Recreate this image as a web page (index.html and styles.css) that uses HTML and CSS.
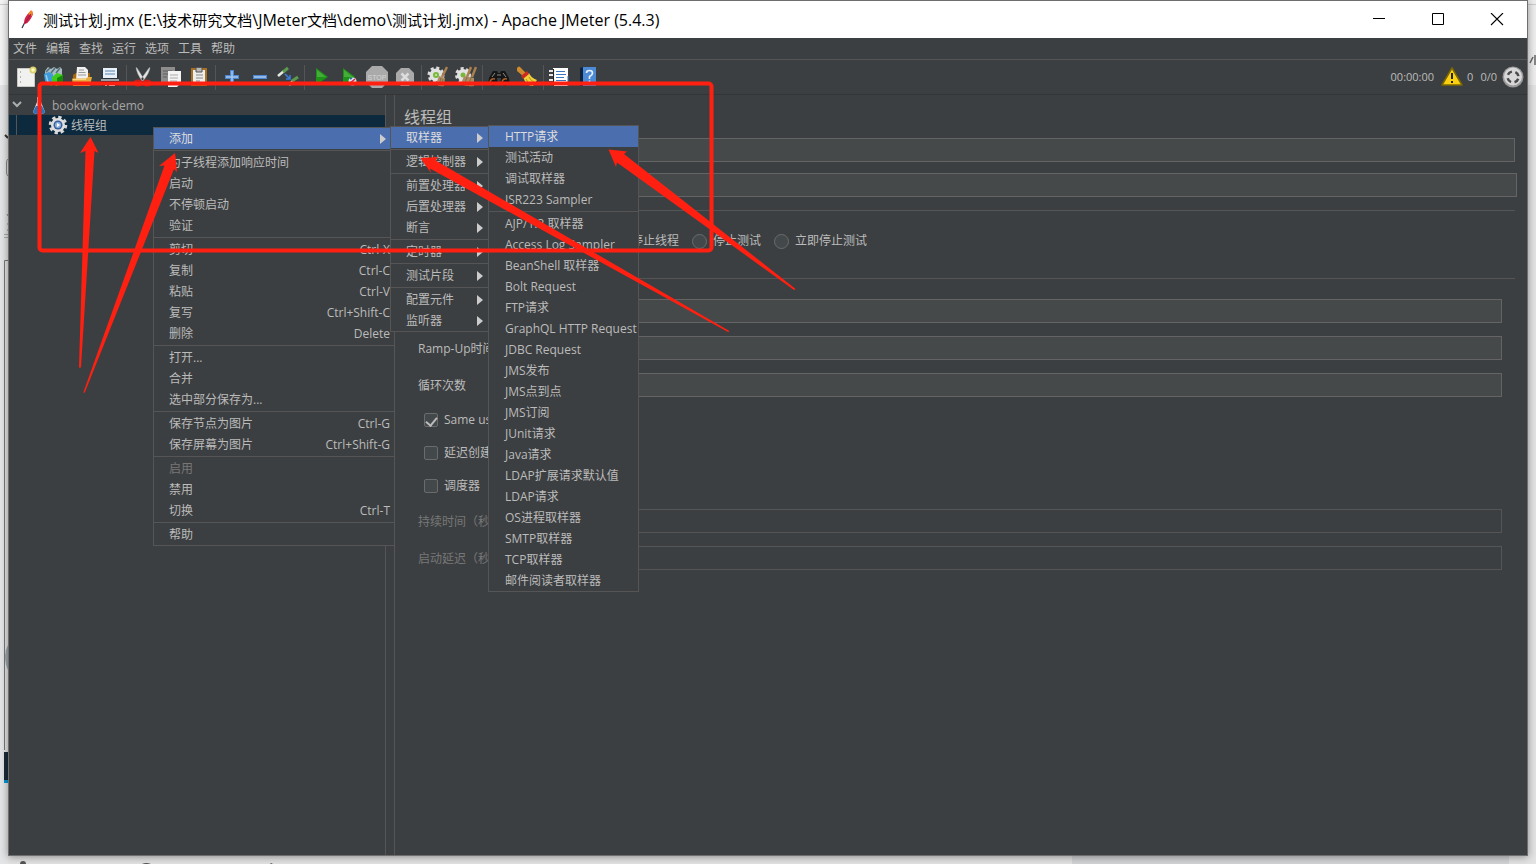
FILE: index.html
```html
<!DOCTYPE html>
<html lang="zh-CN">
<head>
<meta charset="utf-8">
<title>测试计划.jmx - Apache JMeter (5.4.3)</title>
<link rel="stylesheet" href="styles.css">
</head>
<body>
<div class="desktop" aria-hidden="true">
  <svg class="edge-left" width="8" height="864" viewBox="0 0 8 864">
    <path d="M0 0H8V85H0z" fill="#f4f4f4"/><path d="M0 4.500H8" stroke="#ccc"/><path d="M0 85H8V864H0z" fill="#e4e5e6"/>
    <path d="M5 135l3 3" stroke="#333" stroke-width="2"/><path d="M8 159Q6.500 160 6.500 163V172Q6.500 175 8 176" fill="none" stroke="#888"/>
    <path d="M7 214l1 2M7 224h1M7 230h1" stroke="#888"/><path d="M4 234.500H8M4 237.500H8" stroke="#aaa"/>
    <path d="M4.500 750V260.500H8" fill="none" stroke="#777"/><path d="M8 645Q5 650 5 656Q5 664 8 670z" fill="#9fa9b1"/>
    <path d="M4 752H8V780H4z" fill="#1c2b35"/><path d="M4 780H8V783H4z" fill="#0596d4"/>
  </svg>
  <svg class="edge-right" width="8" height="864" viewBox="0 0 8 864">
    <path d="M0 0H8V85H0z" fill="#eeeeee"/><path d="M0 4.500H8" stroke="#ccc"/><path d="M2 63l3-6M7 55v10" stroke="#666" stroke-width="1.500" fill="none"/>
  </svg>
  <svg class="edge-bottom" width="400" height="8" viewBox="0 0 400 8"><path d="M20 8q0-3 3-3t3 3M142 8q4-2 9 0M270 8l1-1 2 1" fill="#555"/></svg>
  <div class="edge-panel"></div>
</div>

<div class="window">
  <header class="titlebar">
    <svg class="app-icon" width="16" height="22" viewBox="0 0 16 22"><path d="M3 19L6 13" stroke="#334" stroke-width="1.300"/><path d="M5 15Q5 9 8 6Q10 3 12 2L14 5Q13 8 11 11Q9 14 6 15z" fill="#d22345"/><path d="M9 5L12 1L14 3L13 7z" fill="#f08a28"/><path d="M6 14L12 5" stroke="#8f1952" stroke-width="1"/></svg>
    <h1 class="title"><span class="han">测试计划</span>.jmx (E:\<span class="han">技术研究文档</span>\JMeter<span class="han">文档</span>\demo\<span class="han">测试计划</span>.jmx) - Apache JMeter (5.4.3)</h1>
    <div class="controls">
      <button class="control" aria-label="最小化"><svg width="14" height="14" viewBox="0 0 14 14"><path d="M1 5.500H13" stroke="#000"/></svg></button>
      <button class="control" aria-label="最大化"><svg width="14" height="14" viewBox="0 0 14 14"><path d="M1.500 0.500H12.500V11.500H1.500z" stroke="#000" fill="none"/></svg></button>
      <button class="control" aria-label="关闭"><svg width="14" height="14" viewBox="0 0 14 14"><path d="M1 0L13 12M13 0L1 12" stroke="#000" stroke-width="1.100"/></svg></button>
    </div>
  </header>

  <nav class="menubar">
    <button>文件</button><button>编辑</button><button>查找</button><button>运行</button><button>选项</button><button>工具</button><button>帮助</button>
  </nav>

  <div class="toolbar">
    <button class="tool" aria-label="新建"><svg viewBox="0 0 22 22"><path d="M2.500 2.500H19.500V20.500H2.500z" fill="#f1f1ef" stroke="#c8c8c4"/><path d="M5 6h1M5 11h1M5 16h1" stroke="#777"/><circle cx="18" cy="4" r="3.500" fill="#d9cf6c"/><circle cx="18" cy="4" r="1.800" fill="#fffcc0"/></svg></button>
    <button class="tool" aria-label="模板"><svg viewBox="0 0 22 22"><path d="M2 5L5 1L8 3L11 1L14 3L17 1L19 3V10H2z" fill="#a9bcc2"/><path d="M3 6L7 2M8 7L12 2M13 7L17 2" stroke="#4f6f7c" stroke-width="1.500"/><path d="M1 8L6 6L10 8V16L5 18L2 15z" fill="#3f9bd8"/><path d="M3 9L5 16" stroke="#8fd0f2" stroke-width="1.500"/><path d="M9 11L14 7L20 9V17L14 20L9 18z" fill="#3fcb1c"/><path d="M14 12L20 9V17L14 20z" fill="#158a08"/><path d="M5 16l4 1v3l-3-1z" fill="#3f9b1d"/></svg></button>
    <button class="tool" aria-label="打开"><svg viewBox="0 0 22 22"><path d="M2 9L5 7H19V20H2z" fill="#a8690e"/><path d="M6 1H14L17 4V14H5z" fill="#f1f1f1"/><path d="M8 4h5M7.500 6.500h7M7 9h8" stroke="#999"/><path d="M1 12.500H15L17 11H21L19 20H2z" fill="#e5ab3c"/><path d="M2 13.500H15" stroke="#f8d47d"/></svg></button>
    <button class="tool" aria-label="保存"><svg viewBox="0 0 22 22"><path d="M3 2H19L20 20H2z" fill="#2b333b"/><path d="M4 2H18V12H4z" fill="#e8f0f8"/><path d="M6 5h10M6 8h10" stroke="#8aa9c8" stroke-width="1.500"/><path d="M2 13H20V15H2z" fill="#9aa0a5"/><path d="M6 16H16V20H6z" fill="#ddd"/><path d="M8 17h2v3h-2z" fill="#444"/></svg></button>
    <span class="sep"></span>
    <button class="tool" aria-label="剪切"><svg viewBox="0 0 22 22"><path d="M4 2Q4 1 5 2L12 13L10 15Q5 8 4 2zM18 2Q18 1 17 2L9 13L11 15Q17 8 18 2z" fill="#e4e4e4" stroke="#999" stroke-width=".500"/><ellipse cx="6" cy="17" rx="3.500" ry="2.500" fill="none" stroke="#c9201c" stroke-width="2"/><ellipse cx="15" cy="17" rx="3.500" ry="2.500" fill="none" stroke="#c9201c" stroke-width="2"/></svg></button>
    <button class="tool" aria-label="复制"><svg viewBox="0 0 22 22"><path d="M1 1H15V16H1z" fill="#8d8d8d"/><path d="M3 5h9M3 8h5M3 11h4" stroke="#5f5f5f"/><path d="M8 5H21V17L17 21H8z" fill="#f4f4f4"/><path d="M10 9h8M10 12h8M10 15h7" stroke="#aaa"/></svg></button>
    <button class="tool" aria-label="粘贴"><svg viewBox="0 0 22 22"><path d="M3 2H19V20H3z" fill="#a9701f"/><path d="M5 4H17V19H5z" fill="#ededed"/><path d="M8 1.500H14V6H8z" fill="#b8b8b8" stroke="#555"/><path d="M8 9h7M8 12h7M8 15h4" stroke="#888"/></svg></button>
    <span class="sep"></span>
    <button class="tool" aria-label="展开"><svg viewBox="0 0 22 22"><path d="M11 4V18M4 11H18" stroke="#4d86d0" stroke-width="4"/><path d="M11 5V17M5 11H17" stroke="#a9c8ee" stroke-width="1.500"/></svg></button>
    <button class="tool" aria-label="折叠"><svg viewBox="0 0 22 22"><path d="M4 11H18" stroke="#4d86d0" stroke-width="4"/><path d="M5 11H17" stroke="#a9c8ee" stroke-width="1.500"/></svg></button>
    <button class="tool" aria-label="切换"><svg viewBox="0 0 22 22"><path d="M1 10L7 5" stroke="#e4e9e4" stroke-width="2.500"/><path d="M6 6L11 2" stroke="#5c9a4e" stroke-width="3"/><path d="M12 19L16 15" stroke="#e4e9e4" stroke-width="2.500"/><path d="M15 15L21 11" stroke="#5c9a4e" stroke-width="3"/><path d="M8 8L13 13M13 9V13H9" fill="none" stroke="#3a7edb" stroke-width="1.500"/></svg></button>
    <span class="sep"></span>
    <button class="tool" aria-label="启动"><svg viewBox="0 0 22 22"><path d="M6 2L18 11L6 19z" fill="#1d9416"/><path d="M7 4L16 11L7 11z" fill="#46ad3b"/></svg></button>
    <button class="tool" aria-label="不停顿启动"><svg viewBox="0 0 22 22"><path d="M5 2L17 11L5 19z" fill="#1d9416"/><path d="M6 4L15 11L6 11z" fill="#46ad3b"/><circle cx="14.500" cy="15.500" r="4" fill="#d9e3f3"/><path d="M11 18L17 13" stroke="#d23" stroke-width="1.500"/><path d="M14 18l3-1M12 13l2-1" stroke="#36a" stroke-width="1.500"/></svg></button>
    <button class="tool" aria-label="停止"><svg viewBox="0 0 22 22"><path d="M6 0H16L22 6V16L16 22H6L0 16V6z" fill="#aaa"/><text x="11" y="14" text-anchor="middle" class="stop-text">STOP</text></svg></button>
    <button class="tool" aria-label="关闭"><svg viewBox="0 0 22 22"><path d="M7 2H15L20 7V16L15 20H7L2 16V7z" fill="#aaa"/><path d="M7.500 7.500L14.500 14.500M14.500 7.500L7.500 14.500" stroke="#ddd" stroke-width="2.500"/></svg></button>
    <span class="sep"></span>
    <button class="tool" aria-label="清除"><svg viewBox="0 0 22 22"><circle cx="9" cy="9" r="7" fill="none" stroke="#dcdcdc" stroke-width="3" stroke-dasharray="3 2.500"/><circle cx="9" cy="9" r="6.500" fill="#e2e2e2"/><circle cx="9" cy="9" r="3" fill="#78b63c"/><circle cx="9" cy="9" r="1.200" fill="#b9e08c"/><path d="M20 1L15 11" stroke="#a8804f" stroke-width="2.500"/><path d="M12 10L18 12L17 20Q12 21 9 18z" fill="#ad8b62"/><path d="M14 12l-2 7M16 13l-1 7" stroke="#876a45"/></svg></button>
    <button class="tool" aria-label="清除全部"><svg viewBox="0 0 22 22"><circle cx="8" cy="9" r="6.500" fill="none" stroke="#dcdcdc" stroke-width="3" stroke-dasharray="3 2.500"/><circle cx="8" cy="9" r="6" fill="#e2e2e2"/><circle cx="8" cy="9" r="2.500" fill="#78b63c"/><path d="M16 1L12 11M21 1L17 11" stroke="#a8804f" stroke-width="2.500"/><path d="M9 10L19 12L19 20Q12 21 6 18z" fill="#ad8b62"/><path d="M12 11l-3 8M16 12l-3 8" stroke="#876a45"/></svg></button>
    <span class="sep"></span>
    <button class="tool" aria-label="查找"><svg viewBox="0 0 22 22"><path d="M1 12L5 5H9L10 7H12L13 5H17L21 12V17H13V12H9V17H1z" fill="#161616"/><circle cx="5" cy="15" r="4.500" fill="#161616"/><circle cx="17" cy="15" r="4.500" fill="#161616"/><path d="M2 16q1-4 5-3M14 16q1-4 5-3" fill="none" stroke="#a95d2d" stroke-width="1.500"/><path d="M7 7L4 11M15 7L18 11M9 9h4" stroke="#8a8a8a"/></svg></button>
    <button class="tool" aria-label="重置搜索"><svg viewBox="0 0 22 22"><path d="M1 2Q3 -1 5 2L10 7L7 10L1 5z" fill="#d08a2d"/><path d="M7 11L13 7Q15 12 21 14L17 20Q10 20 7 11z" fill="#f0cf3c"/><path d="M5 10L11 5L13 8L7 13z" fill="#cc2c20"/><path d="M10 13q2 4 5 6M13 11q2 4 5 5" fill="none" stroke="#b8940f"/></svg></button>
    <span class="sep"></span>
    <button class="tool" aria-label="函数助手"><svg viewBox="0 0 22 22"><path d="M4 2H19V20H4z" fill="#fff"/><path d="M0 5H6M0 9H6M0 14H6M0 18H6" stroke="#e6e6e6" stroke-width="2"/><path d="M4.500 3V20" stroke="#222"/><path d="M7 5.500H16M7 8.500H17M7 11.500H15M7 14.500H17" stroke="#3978bd"/><path d="M19 10V20" stroke="#3978bd"/></svg></button>
    <button class="tool" aria-label="帮助"><svg viewBox="0 0 22 22"><path d="M3 2L6 1V20H3z" fill="#10233e"/><path d="M6 1H19V20H6z" fill="#4d8ad5"/><path d="M9.500 7Q9.500 4.500 12.500 4.500Q15.500 4.500 15.500 7Q15.500 9 12.500 10.500V13M12.500 14.500v2" fill="none" stroke="#e6f0ff" stroke-width="1.600"/></svg></button>
    <div class="status">
      <span class="clock">00:00:00</span>
      <svg width="22" height="20" viewBox="0 0 22 20"><path d="M11 1L21 18H1z" fill="#fbd011" stroke="#7d6800" stroke-width="1.500" stroke-linejoin="round"/><path d="M11 6V12M11 14V16" stroke="#222" stroke-width="2"/></svg>
      <span class="errors">0</span><span class="threads">0/0</span>
      <svg width="22" height="22" viewBox="0 0 22 22"><circle cx="11" cy="11" r="10.500" fill="#9a9a9a"/><circle cx="11" cy="10.500" r="9" fill="#d8d8d8"/><circle cx="11" cy="11" r="5.500" fill="none" stroke="#4a4a4a" stroke-width="2.500" stroke-dasharray="5 3.640" stroke-dashoffset="-1.820"/></svg>
    </div>
  </div>

  <div class="workspace">
    <aside class="tree">
      <div class="node root">
        <svg width="10" height="8" viewBox="0 0 10 8"><path d="M1 1L5 5L9 1" fill="none" stroke="#adadad" stroke-width="2"/></svg>
        <svg class="flask" width="12" height="18" viewBox="0 0 12 18"><path d="M4 1H8V6L12 16Q11 18 6 18Q1 18 0 16L4 6z" fill="#d5e2ef"/><path d="M3 10H9L12 16Q11 18 6 18Q1 18 0 16z" fill="#2b6fbd"/></svg>
        <span>bookwork-demo</span>
      </div>
      <div class="node selected">
        <svg width="20" height="20" viewBox="0 0 20 20"><circle cx="10" cy="10" r="7.500" fill="none" stroke="#d6d6d6" stroke-width="3.500" stroke-dasharray="3.200 2.690"/><circle cx="10" cy="10" r="7" fill="#dedede"/><circle cx="10" cy="10" r="4.500" fill="#355f9e"/><circle cx="10" cy="10" r="3" fill="#8fb1dd"/><path d="M9 8L12 10L9 12z" fill="#fff"/></svg>
        <span>线程组</span>
      </div>
    </aside>

    <main class="editor">
      <h2 class="heading">线程组</h2>
      <div class="field name"><label for="name">名称：</label><input id="name" type="text"></div>
      <div class="field comment"><label for="comment">注释：</label><input id="comment" type="text"></div>
      <section class="group action">
        <label><input type="radio" name="action">继续</label>
        <label><input type="radio" name="action">启动下一进程循环</label>
        <label><input type="radio" name="action">停止线程</label>
        <label><input type="radio" name="action">停止测试</label>
        <label><input type="radio" name="action">立即停止测试</label>
      </section>
      <section class="group props">
        <div class="field"><label for="threads">线程数：</label><input id="threads" type="text"></div>
        <div class="field"><label for="ramp">Ramp-Up时间（秒）：</label><input id="ramp" type="text"></div>
        <div class="field"><label for="loops">循环次数</label><input id="loops" type="text"></div>
        <label class="check"><input type="checkbox" checked>Same user on each iteration</label>
        <label class="check"><input type="checkbox">延迟创建线程直到需要</label>
        <label class="check"><input type="checkbox">调度器</label>
        <div class="field off"><label for="duration">持续时间（秒）</label><input id="duration" type="text" disabled></div>
        <div class="field off"><label for="delay">启动延迟（秒）</label><input id="delay" type="text" disabled></div>
      </section>
    </main>
  </div>

  <div class="popup context">
    <button class="item active sub">添加</button><hr>
    <button class="item">为子线程添加响应时间</button>
    <button class="item">启动</button>
    <button class="item">不停顿启动</button>
    <button class="item">验证</button><hr>
    <button class="item">剪切<kbd>Ctrl-X</kbd></button>
    <button class="item">复制<kbd>Ctrl-C</kbd></button>
    <button class="item">粘贴<kbd>Ctrl-V</kbd></button>
    <button class="item">复写<kbd>Ctrl+Shift-C</kbd></button>
    <button class="item">删除<kbd>Delete</kbd></button><hr>
    <button class="item">打开...</button>
    <button class="item">合并</button>
    <button class="item">选中部分保存为...</button><hr>
    <button class="item">保存节点为图片<kbd>Ctrl-G</kbd></button>
    <button class="item">保存屏幕为图片<kbd>Ctrl+Shift-G</kbd></button><hr>
    <button class="item" disabled>启用</button>
    <button class="item">禁用</button>
    <button class="item">切换<kbd>Ctrl-T</kbd></button><hr>
    <button class="item">帮助</button>
  </div>

  <div class="popup categories">
    <button class="item active sub">取样器</button><hr>
    <button class="item sub">逻辑控制器</button><hr>
    <button class="item sub">前置处理器</button>
    <button class="item sub">后置处理器</button>
    <button class="item sub">断言</button><hr>
    <button class="item sub">定时器</button><hr>
    <button class="item sub">测试片段</button><hr>
    <button class="item sub">配置元件</button>
    <button class="item sub">监听器</button>
  </div>

  <div class="popup samplers">
    <button class="item active">HTTP请求</button>
    <button class="item">测试活动</button>
    <button class="item">调试取样器</button>
    <button class="item">JSR223 Sampler</button><hr>
    <button class="item">AJP/1.3 取样器</button>
    <button class="item">Access Log Sampler</button>
    <button class="item">BeanShell 取样器</button>
    <button class="item">Bolt Request</button>
    <button class="item">FTP请求</button>
    <button class="item">GraphQL HTTP Request</button>
    <button class="item">JDBC Request</button>
    <button class="item">JMS发布</button>
    <button class="item">JMS点到点</button>
    <button class="item">JMS订阅</button>
    <button class="item">JUnit请求</button>
    <button class="item">Java请求</button>
    <button class="item">LDAP扩展请求默认值</button>
    <button class="item">LDAP请求</button>
    <button class="item">OS进程取样器</button>
    <button class="item">SMTP取样器</button>
    <button class="item">TCP取样器</button>
    <button class="item">邮件阅读者取样器</button>
  </div>
</div>

<svg class="marks" width="800" height="400" viewBox="0 0 800 400" aria-hidden="true">
  <rect x="39.500" y="83.500" width="672" height="167" rx="3" fill="none" stroke="#ff2012" stroke-width="4"/>
  <g fill="#ff2012">
    <path d="M90.500 137L98.500 153L94.500 151L81 367Q80 369 79 367L85.500 151L80 153z"/>
    <path d="M175 153L177 172L174 169L85 392Q84 394 83.500 392L164.500 165.500L159 166z"/>
    <path d="M420.500 158L438 157L435.500 160.500L728.500 330.500Q730 332 728 332L430 168.500L431 173z"/>
    <path d="M608.500 149.500L627 151.500L624 154L795 288.500Q796 290 794 290L617 162.500L616 167z"/>
  </g>
</svg>
</body>
</html>
```
FILE: styles.css
```css
* { box-sizing: border-box; }

body {
  position: relative;
  height: 100vh;
  margin: 0;
  padding: 0 8px 8px;
  overflow: hidden;
  background: #e3e3e3;
  color: #bbbbbb;
  font: 12px/20px "Open Sans", "Noto Sans CJK SC", sans-serif;
}

svg { display: block; flex: none; }

button {
  margin: 0;
  padding: 0;
  border: 0;
  background: none;
  color: inherit;
  font: inherit;
}

.edge-left, .edge-right { position: absolute; top: 0; }
.edge-left { left: 0; }
.edge-right { right: 0; }
.edge-bottom { position: absolute; bottom: 0; left: 0; }
.edge-panel {
  position: absolute;
  right: 27px;
  bottom: 0;
  width: 437px;
  height: 8px;
  background: #d3d4d6;
}

.window {
  position: relative;
  display: flex;
  flex-direction: column;
  height: 100%;
  border: 1px solid #6e6e6e;
  background: #3c3f41;
  box-shadow: 0 1px 8px rgba(0, 0, 0, 0.4);
}

.titlebar {
  display: flex;
  align-items: center;
  height: 37px;
  padding: 0 1px 0 10px;
  background: #ffffff;
  color: #000000;
}
.title {
  flex: 1;
  margin: 0 0 0 8px;
  font-size: 16px;
  font-weight: 400;
  line-height: 24px;
  white-space: nowrap;
}
.han { font-size: 15px; }
.controls { display: flex; height: 100%; }
.control {
  display: flex;
  align-items: center;
  justify-content: center;
  width: 59px;
}

.menubar {
  display: flex;
  gap: 9px;
  height: 22px;
  padding: 1px 0 0 4px;
  border-bottom: 1px solid #555555;
}

.toolbar {
  display: flex;
  align-items: center;
  height: 35px;
  padding: 0 3px;
  border-bottom: 1px solid #333537;
}
.tool { display: flex; justify-content: center; width: 28px; }
.tool svg { width: 22px; height: 22px; }
.stop-text { fill: #d5d5d5; font: 7px "Liberation Sans", sans-serif; }
.sep {
  width: 1px;
  height: 25px;
  margin: 0 2px;
  background: #555555;
}
.status { display: flex; align-items: center; margin-left: auto; font-size: 11px; }
.clock { margin-right: 7px; }
.errors { margin: 0 7px 0 4px; }
.threads { margin-right: 5px; }

.workspace { display: flex; flex: 1; min-height: 0; }

.tree {
  flex: none;
  width: 377px;
  border-right: 1px solid #555555;
}
.node { display: flex; align-items: center; height: 20px; }
.node span { padding-top: 2px; }
.root { gap: 6px; padding-left: 3px; color: #a5a5a5; }
.root .flask { margin: 0 1px 0 5px; }
.selected {
  gap: 3px;
  margin-left: 7px;
  padding-left: 31px;
  border-left: 1px solid #555555;
  background: #0d293e;
  box-shadow: -7px 0 #0d293e;
}

.editor {
  flex: 1;
  min-width: 0;
  margin-left: 8px;
  padding: 10px 10px 0 9px;
  border-left: 1px solid #555555;
}
.heading {
  margin: 0 0 9px;
  font-size: 16px;
  font-weight: 400;
  line-height: 24px;
}
.field { display: flex; align-items: center; height: 24px; }
.field label { width: 130px; padding-top: 2px; white-space: nowrap; }
.field input {
  flex: 1;
  min-width: 0;
  height: 24px;
  border: 1px solid #646464;
  background: #45494a;
  color: inherit;
  font: inherit;
}
.name { margin: 0 2px 11px 0; }
.comment { margin-bottom: 13px; }
.group { margin-right: 2px; border-top: 1px solid #555555; }
.action {
  display: flex;
  align-items: center;
  gap: 13px;
  height: 68px;
  padding: 0 0 7px 18px;
}
.action label { display: flex; align-items: center; gap: 6px; white-space: nowrap; }
.action input {
  appearance: none;
  width: 15px;
  height: 15px;
  margin: 0;
  border: 1px solid #6b6b6b;
  border-radius: 50%;
  background: #43494a;
}
.props {
  display: flex;
  flex-direction: column;
  gap: 13px;
  padding: 20px 13px 0 14px;
}
.off { color: #777777; }
.off input { border-color: #555555; background: #3c3f41; }
.check { display: flex; align-items: center; gap: 6px; height: 20px; padding-left: 6px; white-space: nowrap; }
.check input {
  appearance: none;
  display: flex;
  justify-content: center;
  width: 14px;
  height: 14px;
  margin: 0;
  border: 1px solid #6b6b6b;
  border-radius: 2px;
  background: #43494a;
}
.check input:checked::after {
  content: "";
  width: 5px;
  height: 9px;
  margin-top: 1px;
  border: solid #bbbbbb;
  border-width: 0 2px 2px 0;
  transform: rotate(40deg);
}

.popup {
  position: absolute;
  display: flex;
  flex-direction: column;
  border: 1px solid #555555;
  background: #3c3f41;
}
.context { top: 126px; left: 144px; width: 242px; }
.categories { top: 125px; left: 381px; width: 99px; }
.samplers { top: 124px; left: 479px; width: 151px; }
.popup hr {
  width: 100%;
  height: 1px;
  margin: 1px 0;
  border: 0;
  background: #555555;
}
.item {
  display: flex;
  align-items: center;
  justify-content: space-between;
  height: 21px;
  padding: 1px 4px 0 15px;
  text-align: left;
  white-space: nowrap;
}
.samplers .item { padding-left: 16px; }
.item:disabled { color: #777777; }
.active { background: #4b6eaf; color: #dddddd; }
.item kbd { font: inherit; }
.sub::after {
  content: "";
  margin-right: 1px;
  border: solid transparent;
  border-width: 5px 0 5px 6px;
  border-left-color: #cccccc;
}
.context .sub::after { margin-right: 4px; }

.marks { position: absolute; top: 0; left: 0; pointer-events: none; }
```
